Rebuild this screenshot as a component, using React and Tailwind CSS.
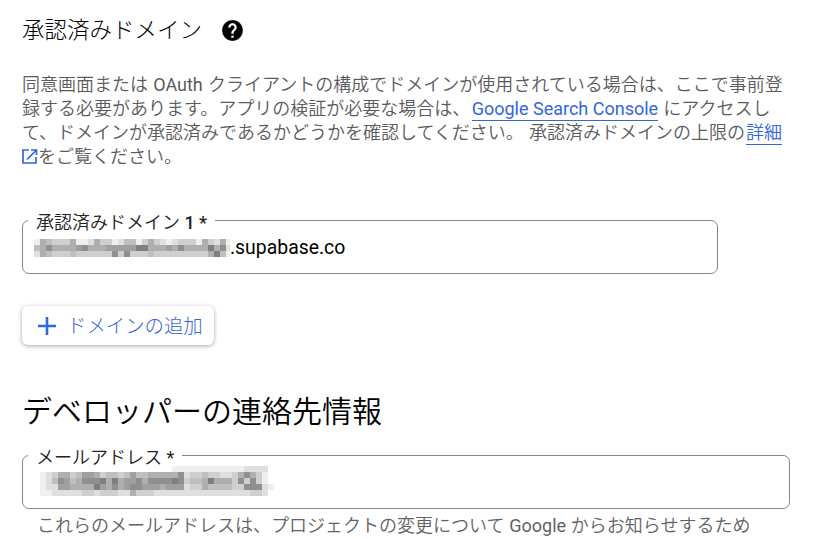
// Darkness levels of the pixelated, redacted strings (0 = white, f = darkest).
const DOMAIN_ROWS = [
  "154333511253312441353212333153251",
  "457555567555666668855565755558572",
  "254333433333373733343333333335841",
];
const MAIL_ROWS = [
  "000000000000000000000011111111111122220",
  "123553466534434644555557233433223575310",
  "124764577785856675777787344585553737310",
  "122665555865756776665666233544443377721",
  "112222233233322533322222222222222223320",
];

function Mosaic({ rows, className }) {
  return (
    <div className={className} aria-hidden="true">
      {rows.map((row, y) => (
        <div key={y} className="flex h-[6px]">
          {row.split("").map((level, x) => (
            <span
              key={x}
              className="h-[6px] w-[6px] shrink-0 bg-black"
              style={{ opacity: parseInt(level, 16) / 16 }}
            />
          ))}
        </div>
      ))}
    </div>
  );
}

function Field({ label, width, children }) {
  return (
    <fieldset className={`${width} h-[64px] rounded-[7px] border border-[#80868b] pl-[5px]`}>
      <legend className="h-[20px] whitespace-nowrap px-[8px] text-[18px] leading-[25px] text-[#202124]">{label}</legend>
      {children}
    </fieldset>
  );
}

export default function App() {
  return (
    <main className="h-[539px] w-[821px] overflow-hidden bg-white pl-[22px] pt-[13px] font-[Roboto,'Noto_Sans_CJK_JP',sans-serif] font-[350] text-black">
      <div className="flex h-[34px] items-center">
        <h1 className="text-[22.5px] font-light leading-[34px]">承認済みドメイン</h1>
        <svg className="ml-[18px] h-[25px] w-[25px]" viewBox="0 0 24 24">
          <path d="M12 2C6.48 2 2 6.48 2 12s4.48 10 10 10 10-4.48 10-10S17.52 2 12 2zm1 17h-2v-2h2v2zm2.07-7.75l-.9.92C13.45 12.9 13 13.5 13 15h-2v-.5c0-1.1.45-2.1 1.17-2.83l1.24-1.26c.37-.36.59-.86.59-1.41 0-1.1-.9-2-2-2s-2 .9-2 2H8c0-2.21 1.79-4 4-4s4 1.79 4 4c0 .88-.36 1.68-.93 2.25z" stroke="white" strokeWidth="0.2" />
        </svg>
      </div>
      <p className="mt-[26px] whitespace-nowrap text-[18px] leading-[24px] text-[#5a5b5e] [word-spacing:0.8px]">
        同意画面または <span className="font-normal">OAuth</span> クライアントの構成でドメインが使用されている場合は、ここで事前登<br />
        録する必要があります。アプリの検証が必要な場合は、<a className="ml-[1.5px] border-b border-[#3367d6] pb-px font-normal text-[#3367d6] [word-spacing:0px]">Google Search Console</a> にアクセスし<br />
        て、ドメインが承認済みであるかどうかを確認してください。 承認済みドメインの上限の<a className="ml-px border-b border-[#3367d6] pb-px text-[#3367d6]">詳細</a><br />
        <svg className="inline h-[15px] w-[16px] align-[-1px]" viewBox="0 0 16 15" fill="none" stroke="#3367d6" strokeWidth="1.7">
          <path d="M7 1H1v13h13V8M9 1h5.5v5M14 1.5L5 10.5" />
        </svg>をご覧ください。
      </p>
      <div className="mt-[41px]">
        <Field width="w-[696px]" label={<>承認済みドメイン <span className="font-medium">1 *</span></>}>
          <div className="flex h-[34px] items-center text-[19.4px] font-normal leading-[34px]">
            <Mosaic rows={DOMAIN_ROWS} className="ml-[6px] mt-[2px] w-[196px] overflow-hidden" />
            <span className="mt-[2px]">.supabase.co</span>
          </div>
        </Field>
      </div>
      <button className="mt-[32px] flex h-[39px] w-[192px] items-center rounded-[6px] bg-white pl-[16px] text-[19.4px] font-light text-[#3367d6] shadow-[0_1px_4px_rgba(0,0,0,0.35)]">
        <svg className="h-[18px] w-[18px]" viewBox="0 0 18 18" stroke="#3367d6" strokeWidth="2.6">
          <path d="M9 0v18M0 9h18" />
        </svg>
        <span className="ml-[11px] mt-[2px] whitespace-nowrap">ドメインの追加</span>
      </button>
      <h2 className="mt-[47px] h-[39px] text-[30px] leading-[40px]">デベロッパーの連絡先情報</h2>
      <div className="mt-[14px]">
        <Field width="w-[768px]" label={<>メールアドレス <span className="font-normal">*</span></>}>
          <Mosaic rows={MAIL_ROWS} className="ml-[12px] mt-px overflow-hidden" />
        </Field>
      </div>
      <p className="ml-[15px] mt-[5px] whitespace-nowrap text-[18px] leading-[24px] text-[#5f6368] [word-spacing:0.4px]">
        これらのメールアドレスは、プロジェクトの変更について <span className="font-normal">Google</span> からお知らせするため
      </p>
    </main>
  );
}
